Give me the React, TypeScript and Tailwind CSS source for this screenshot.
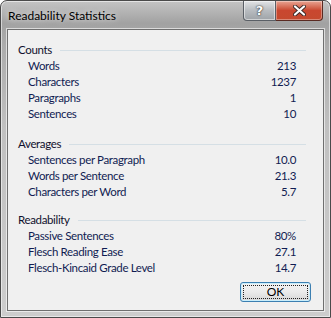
/** Readability Statistics dialog — Windows 7 Aero style. */

type Row = { label: string; value: string };
type Section = { title: string; rows: Row[]; gap: string };

const sections: Section[] = [
  {
    title: "Counts",
    gap: "mt-0",
    rows: [
      { label: "Words", value: "213" },
      { label: "Characters", value: "1237" },
      { label: "Paragraphs", value: "1" },
      { label: "Sentences", value: "10" },
    ],
  },
  {
    title: "Averages",
    gap: "mt-[14px]",
    rows: [
      { label: "Sentences per Paragraph", value: "10.0" },
      { label: "Words per Sentence", value: "21.3" },
      { label: "Characters per Word", value: "5.7" },
    ],
  },
  {
    title: "Readability",
    gap: "mt-[12px]",
    rows: [
      { label: "Passive Sentences", value: "80%" },
      { label: "Flesch Reading Ease", value: "27.1" },
      { label: "Flesch-Kincaid Grade Level", value: "14.7" },
    ],
  },
];

function StatSection({ section }: { section: Section }) {
  return (
    <div className={section.gap}>
      <div className="flex h-[16px] items-center pl-[10px] pr-[17px] text-[#10102e]">
        <span className="leading-[16px]">{section.title}</span>
        <div className="ml-[8px] h-px flex-1 bg-[#d5dfe5]" />
      </div>
      {section.rows.map((row) => (
        <div
          key={row.label}
          className="flex h-[16px] items-center justify-between pl-[20px] pr-[27px] leading-[16px] text-[#101c52]"
        >
          <span>{row.label}</span>
          <span>{row.value}</span>
        </div>
      ))}
    </div>
  );
}

function HelpButton() {
  return (
    <div className="flex h-[20px] w-[33px] items-center justify-center rounded-bl-[4px] border border-t-0 border-[#5a5f66] bg-gradient-to-b from-[#e2e4e6] via-[#b8bcc0] to-[#9ea3a8] shadow-[inset_0_0_0_1px_rgba(255,255,255,0.5)]">
      <span className="font-['DejaVu_Sans',sans-serif] text-[13px] font-bold leading-none tracking-normal text-white [text-shadow:0_0_2px_#333,0_0_1px_#222]">
        ?
      </span>
    </div>
  );
}

function CloseButton() {
  return (
    <div className="flex h-[20px] w-[47px] items-center justify-center rounded-br-[4px] border border-l-0 border-t-0 border-[#5a2a22] bg-gradient-to-b from-[#e8a493] via-[#c9472f] to-[#c54a2e] shadow-[inset_0_0_0_1px_rgba(255,255,255,0.35)]">
      <svg width="13" height="11" viewBox="0 0 13 11">
        <path
          d="M2 1.5 L11 9.5 M11 1.5 L2 9.5"
          stroke="#3b2a28"
          strokeWidth="4"
          strokeLinecap="round"
        />
        <path
          d="M2 1.5 L11 9.5 M11 1.5 L2 9.5"
          stroke="#ffffff"
          strokeWidth="2.2"
          strokeLinecap="round"
        />
      </svg>
    </div>
  );
}

export default function App() {
  return (
    <div className="h-[318px] w-[331px] bg-white font-['Lato',sans-serif] text-[11.5px] tracking-[-0.35px]">
      <div className="flex h-full w-full flex-col rounded-t-[7px] border border-[#4a4a4a] bg-[linear-gradient(180deg,#c4c4c4_0%,#a2a2a2_7%,#acacac_14%,#c0c0c0_40%,#cdcdcd_100%)] shadow-[inset_0_0_0_1px_rgba(255,255,255,0.55)]">
        <div className="flex h-[28px] shrink-0 items-start">
          <span className="pl-[7px] pt-[7px] text-[12px] leading-[16px] tracking-normal text-black [text-shadow:0_0_6px_rgba(255,255,255,0.9)]">
            Readability Statistics
          </span>
          <div className="ml-auto mr-[7px] flex">
            <HelpButton />
            <CloseButton />
          </div>
        </div>
        <div className="mx-[6px] mb-[6px] flex flex-1 flex-col border border-[#6f6f6f] bg-[#f0f0f0] pt-[12px] shadow-[0_0_0_1px_rgba(255,255,255,0.6)]">
          {sections.map((s) => (
            <StatSection key={s.title} section={s} />
          ))}
          <div className="mt-[6px] flex justify-end pr-[12px]">
            <button className="flex h-[20px] w-[71px] items-center justify-center rounded-[3px] border border-[#3c7fb1] bg-gradient-to-b from-[#f2f2f2] via-[#ebebeb] to-[#d6d6d6] p-[2px] shadow-[inset_0_0_0_1px_#c9eefc]">
              <span className="flex h-full w-full items-center justify-center border border-dotted border-[#222] text-[12px] leading-none tracking-normal text-black">
                OK
              </span>
            </button>
          </div>
        </div>
      </div>
    </div>
  );
}
